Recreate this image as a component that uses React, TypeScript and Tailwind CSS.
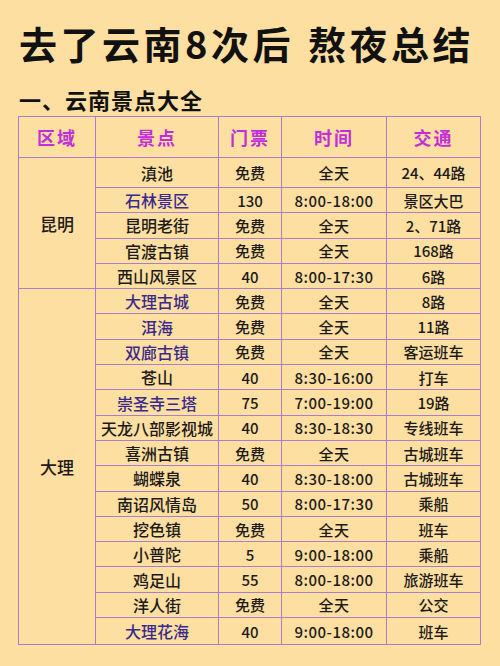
const ROWS: { region?: string; span?: number; name: string; blue?: boolean; price: string; time: string; traffic: string }[] = [
  { region: "昆明", span: 5, name: "滇池", price: "免费", time: "全天", traffic: "24、44路" },
  { name: "石林景区", blue: true, price: "130", time: "8:00-18:00", traffic: "景区大巴" },
  { name: "昆明老街", price: "免费", time: "全天", traffic: "2、71路" },
  { name: "官渡古镇", price: "免费", time: "全天", traffic: "168路" },
  { name: "西山风景区", price: "40", time: "8:00-17:30", traffic: "6路" },
  { region: "大理", span: 14, name: "大理古城", blue: true, price: "免费", time: "全天", traffic: "8路" },
  { name: "洱海", blue: true, price: "免费", time: "全天", traffic: "11路" },
  { name: "双廊古镇", blue: true, price: "免费", time: "全天", traffic: "客运班车" },
  { name: "苍山", price: "40", time: "8:30-16:00", traffic: "打车" },
  { name: "崇圣寺三塔", blue: true, price: "75", time: "7:00-19:00", traffic: "19路" },
  { name: "天龙八部影视城", price: "40", time: "8:30-18:30", traffic: "专线班车" },
  { name: "喜洲古镇", price: "免费", time: "全天", traffic: "古城班车" },
  { name: "蝴蝶泉", price: "40", time: "8:30-18:00", traffic: "古城班车" },
  { name: "南诏风情岛", price: "50", time: "8:00-17:30", traffic: "乘船" },
  { name: "挖色镇", price: "免费", time: "全天", traffic: "班车" },
  { name: "小普陀", price: "5", time: "9:00-18:00", traffic: "乘船" },
  { name: "鸡足山", price: "55", time: "8:00-18:00", traffic: "旅游班车" },
  { name: "洋人街", price: "免费", time: "全天", traffic: "公交" },
  { name: "大理花海", blue: true, price: "40", time: "9:00-18:00", traffic: "班车" },
];

const cell = "border border-[#a97fcb] text-center align-middle p-0";

export default function App() {
  return (
    <div
      className="w-[500px] h-[666px] overflow-hidden bg-[#fddfa1] text-[#1c1a1a]"
      style={{ fontFamily: '"Noto Sans CJK SC", "Noto Sans", sans-serif' }}
    >
      <h1 className="pt-[24px] pl-[19px] text-[38px] font-bold leading-none tracking-[3.5px] text-[#111]">
        去了云南8次后<span className="ml-[14px]">熬夜总结</span>
      </h1>
      <h2 className="mt-[26px] pl-[19px] text-[22px] font-bold leading-none tracking-[1px] text-[#111]">
        一、云南景点大全
      </h2>
      <table className="mt-[6px] ml-[18px] w-[462px] border-collapse table-fixed">
        <colgroup>
          <col className="w-[77px]" />
          <col className="w-[123px]" />
          <col className="w-[63px]" />
          <col className="w-[105px]" />
          <col className="w-[94px]" />
        </colgroup>
        <thead>
          <tr className="h-[41px] text-[18px] font-bold tracking-[2px] text-[#c22fd8]">
            <th className={cell}>区域</th>
            <th className={cell}>景点</th>
            <th className={cell}>门票</th>
            <th className={cell}>时间</th>
            <th className={cell}>交通</th>
          </tr>
        </thead>
        <tbody className="text-[15px] font-medium leading-none">
          {ROWS.map((r, i) => (
            <tr key={r.name} className={i === 0 ? "h-[30px]" : i === ROWS.length - 1 ? "h-[27px]" : "h-[25.3px]"}>
              {r.region && (
                <td rowSpan={r.span} className={`${cell} text-[17px]`}>
                  {r.region}
                </td>
              )}
              <td className={`${cell} text-[16px] ${r.blue ? "text-[#3a2a8c]" : ""}`}>{r.name}</td>
              <td className={cell}>{r.price}</td>
              <td className={`${cell} tracking-[0.5px]`}>{r.time}</td>
              <td className={cell}>{r.traffic}</td>
            </tr>
          ))}
        </tbody>
      </table>
    </div>
  );
}
